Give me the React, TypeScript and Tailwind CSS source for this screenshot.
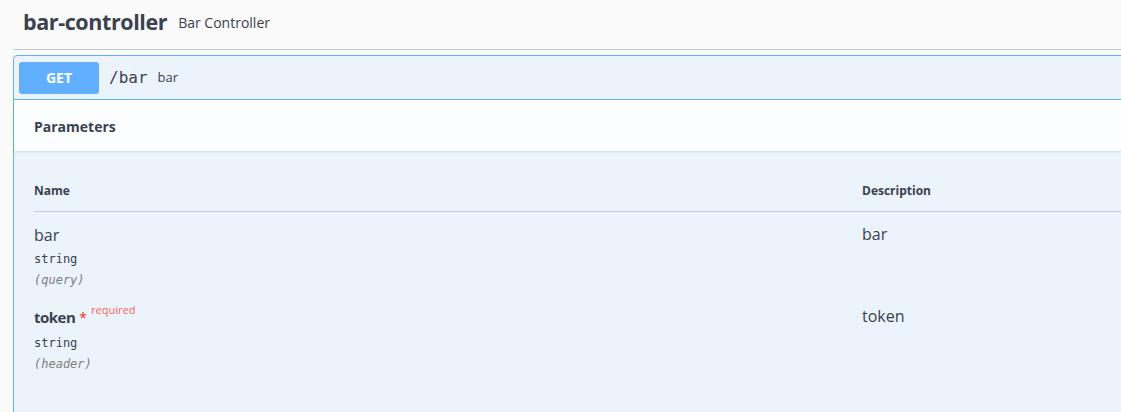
import React from "react";

const sans = { fontFamily: '"Open Sans", "Noto Sans", sans-serif' };
const mono = { fontFamily: '"DejaVu Sans Mono", "Liberation Mono", monospace' };

function ParamRow({ name, required, type, where, desc }: { name: string; required?: boolean; type: string; where: string; desc: string }) {
  return (
    <div className="flex">
      <div className="w-[828px] shrink-0">
        <div className="flex items-start h-[24px]">
          <span className={`leading-[24px] text-[#3b4151] ${required ? "font-bold text-[15px] tracking-[-0.5px]" : "text-[16px]"}`}>{name}</span>
          {required && (
            <span className="ml-[4px] flex items-start">
              <span className="text-[14px] leading-[18px] text-[#ff2a2a] mt-[4px]">*</span>
              <span className="ml-[4px] text-[11px] leading-[14px] text-[#ff6262] -mt-[2px]">required</span>
            </span>
          )}
        </div>
        <div className={`text-[12px] leading-[15px] text-[#3b4151] ${required ? "mt-[7px]" : "mt-[5px]"}`} style={mono}>{type}</div>
        <div className="text-[12px] leading-[15px] text-[#808080] italic mt-[6px]" style={mono}>{where}</div>
      </div>
      <div className="text-[16px] leading-[22px] text-[#3b4151]">{desc}</div>
    </div>
  );
}

export default function App() {
  return (
    <div className="w-[1121px] h-[412px] overflow-hidden bg-[#fafafa]" style={sans}>
      <div className="w-[1300px] ml-[13px]">
        <div className="h-[50px] flex items-center pl-[10px] border-b border-[#c6c7cb]">
          <span className="text-[21.5px] font-bold text-[#3b4151] tracking-[-0.4px] -mt-[4px]">bar-controller</span>
          <span className="ml-[11px] text-[14px] text-[#3b4151] -mt-[4px]">Bar Controller</span>
        </div>
        <div className="mt-[5px] border border-[#61affe] rounded-[4px] bg-[#ebf3fb] h-[400px]">
          <div className="h-[44px] flex items-center px-[5px] border-b border-[#61affe]">
            <div className="w-[80px] h-[32px] rounded-[3px] bg-[#61affe] flex items-center justify-center text-white text-[14px] font-bold">GET</div>
            <span className="ml-[10px] text-[16px] text-[#3b4151]" style={mono}>/bar</span>
            <span className="ml-[10px] text-[13px] text-[#3b4151]">bar</span>
          </div>
          <div className="h-[51px] bg-[#fcfdfe] flex items-center pl-[20px] shadow-[0_1px_2px_rgba(0,0,0,0.1)]">
            <span className="text-[14px] font-bold text-[#3b4151] mt-[1px]">Parameters</span>
          </div>
          <div className="pl-[20px] pt-[31px]">
            <div className="flex h-[30px] border-b border-[#c5cdd8] text-[12px] font-bold text-[#3b4151] leading-[18px]">
              <div className="w-[828px] shrink-0">Name</div>
              <div>Description</div>
            </div>
            <div className="pt-[11px]">
              <ParamRow name="bar" type="string" where="(query)" desc="bar" />
            </div>
            <div className="pt-[17px]">
              <ParamRow name="token" required type="string" where="(header)" desc="token" />
            </div>
          </div>
        </div>
      </div>
    </div>
  );
}
